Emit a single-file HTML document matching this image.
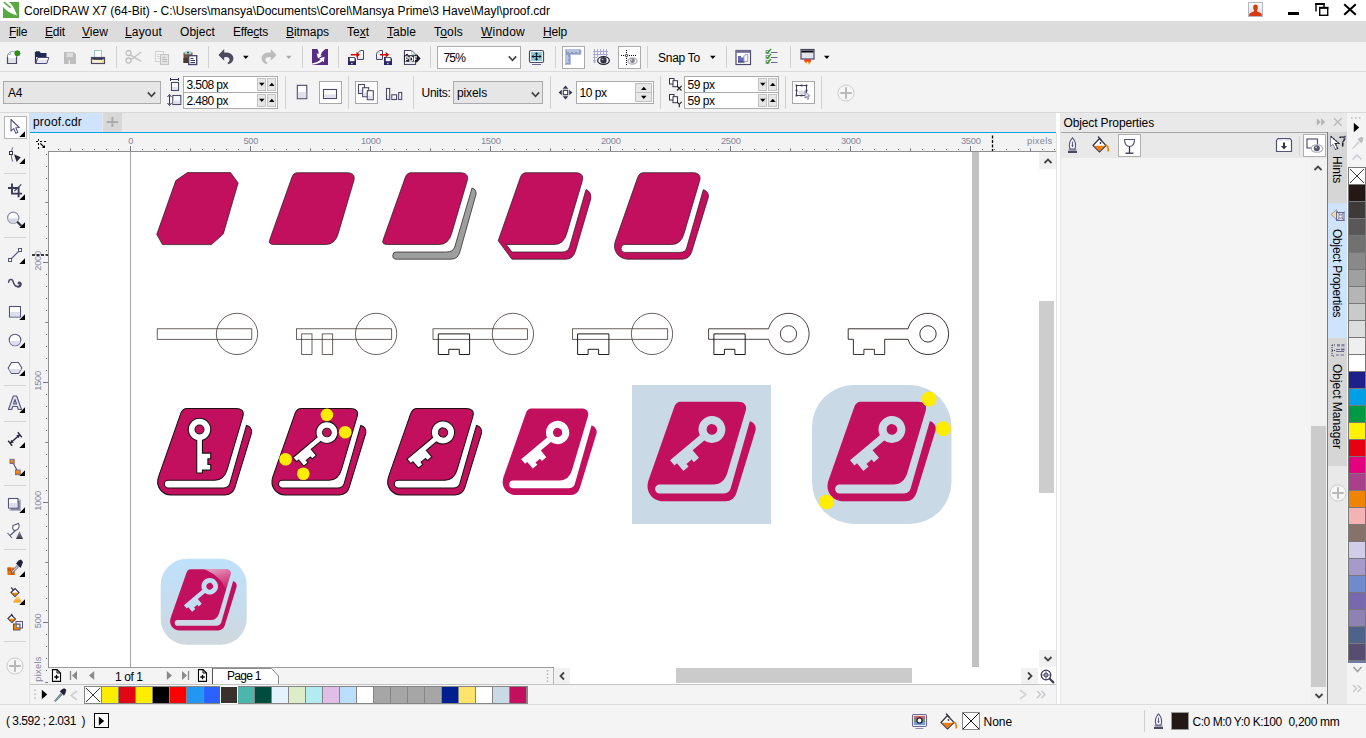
<!DOCTYPE html>
<html>
<head>
<meta charset="utf-8">
<title>CorelDRAW X7</title>
<style>
*{box-sizing:border-box;margin:0;padding:0}
html,body{width:1366px;height:738px;overflow:hidden;background:#f3f3f3;font-family:"Liberation Sans",sans-serif;font-size:13px;color:#000}
.abs{position:absolute}
#app{position:relative;width:1366px;height:738px;overflow:hidden;background:#f3f3f3}
.t{position:absolute;white-space:nowrap;line-height:1}
u{text-decoration:underline;text-underline-offset:1px}
/* bars */
#titlebar{left:0;top:0;width:1366px;height:21px;background:#fff}
#menubar{left:0;top:21px;width:1366px;height:21px;background:#dcdcdc}
#tb1{left:0;top:42px;width:1366px;height:29px;background:#f3f3f3}
#tb1line{left:0;top:71px;width:1366px;height:1px;background:#dcdcdc}
#propbar{left:0;top:72px;width:1366px;height:40px;background:#f3f3f3}
#tabrow{left:0;top:112px;width:1366px;height:20px;background:#e9e9e9;border-top:1px solid #d9d9d9}
.sep{position:absolute;width:1px;background:#d0d0d0}
.menu{top:26px;font-size:13px}
</style>
</head>
<body>
<div id="app">
<!-- TITLE BAR -->
<div id="titlebar" class="abs">
<svg class="abs" style="left:3px;top:2px" width="16" height="16" viewBox="0 0 16 16"><rect width="16" height="16" fill="#58a943"/><path d="M0,0 H5.900 C8.200,1.800 10.500,4.800 11.900,8.200 L14.100,13.600 L10.200,12.200 C6.300,10.400 3,8 0,4.900 Z" fill="#fff"/><path d="M1.200,0.300 L7.200,5.300" stroke="#58a943" stroke-width="1.500" stroke-linecap="round"/></svg>
<div class="t" style="left:24px;top:5px;font-size:12px;letter-spacing:0.01px">CorelDRAW X7 (64-Bit) - C:\Users\mansya\Documents\Corel\Mansya Prime\3 Have\Mayl\proof.cdr</div>
<svg class="abs" style="left:1248px;top:2px" width="15" height="15" viewBox="0 0 15 15"><defs><linearGradient id="ug" x1="0" y1="0" x2="0" y2="1"><stop offset="0" stop-color="#fff"/><stop offset="1" stop-color="#d4d4d8"/></linearGradient></defs><rect x="0.5" y="0.5" width="14" height="14" fill="url(#ug)" stroke="#b4b8c4"/><path d="M7.5 2.6c1.5 0 2.3 1.2 2.3 2.9 0 1.3-.5 2.2-1 2.8 0 .9.5 1.3 1.6 1.7 1.5.5 3 1 3.4 2.5V14H1.2v-1.5c.4-1.5 1.9-2 3.4-2.500 1.100-.4 1.600-.8 1.600-1.700-.5-.6-1-1.500-1-2.800 0-1.700.8-2.900 2.300-2.900z" fill="#d63a0f"/></svg>
<div class="abs" style="left:1288px;top:12px;width:11px;height:3px;background:#000"></div>
<svg class="abs" style="left:1314px;top:2px" width="16" height="15" viewBox="0 0 16 15"><path d="M2 9.500V1.800h8V5" fill="none" stroke="#000" stroke-width="1.400"/><path d="M1.300 2h9.400" stroke="#000" stroke-width="2"/><rect x="5.700" y="5.700" width="8" height="7.600" fill="#fff" stroke="#000" stroke-width="1.400"/><path d="M5 5.800h9.400" stroke="#000" stroke-width="2"/></svg>
<svg class="abs" style="left:1342px;top:3px" width="16" height="14" viewBox="0 0 16 14"><path d="M2.200 1.200L13.800 11.800M13.800 1.200L2.200 11.800" stroke="#000" stroke-width="2.100" fill="none"/></svg>
</div>
<!-- MENU BAR -->
<div id="menubar" class="abs">
<div class="t" style="left:9px;top:5px;font-size:12px;letter-spacing:-0.33px"><u>F</u>ile</div>
<div class="t" style="left:45px;top:5px;font-size:12px;letter-spacing:-0.17px"><u>E</u>dit</div>
<div class="t" style="left:82px;top:5px;font-size:12px;letter-spacing:0.05px"><u>V</u>iew</div>
<div class="t" style="left:125px;top:5px;font-size:12px;letter-spacing:0.16px"><u>L</u>ayout</div>
<div class="t" style="left:180px;top:5px;font-size:12px;letter-spacing:0.05px">Ob<u>j</u>ect</div>
<div class="t" style="left:233px;top:5px;font-size:12px;letter-spacing:-0.21px">Effe<u>c</u>ts</div>
<div class="t" style="left:286px;top:5px;font-size:12px;letter-spacing:-0.05px"><u>B</u>itmaps</div>
<div class="t" style="left:347px;top:5px;font-size:12px;letter-spacing:0px">Te<u>x</u>t</div>
<div class="t" style="left:387px;top:5px;font-size:12px;letter-spacing:0.06px"><u>T</u>able</div>
<div class="t" style="left:434px;top:5px;font-size:12px;letter-spacing:0.2px">T<u>o</u>ols</div>
<div class="t" style="left:481px;top:5px;font-size:12px;letter-spacing:0.22px"><u>W</u>indow</div>
<div class="t" style="left:543px;top:5px;font-size:12px;letter-spacing:-0.17px"><u>H</u>elp</div>
</div>
<!-- TOOLBAR 1 -->
<div id="tb1" class="abs">
<svg class="abs" style="left:6px;top:6px" width="16" height="18" viewBox="0 0 16 18" ><path d="M4.500 3.500H10.500V15.500H1.500V6.500Z" fill="#fff"/><path d="M2 10H10V15H2Z" fill="#e3e3ee"/><path d="M4.500 3.500H10.500M4.500 3.500L1.500 6.500M4.500 3.500V6.500H1.500" fill="none" stroke="#a9b4c0" stroke-width="1"/><path d="M1.500 6.500V8.500M10.500 3.500V8.500" stroke="#8f90aa" stroke-width="1"/><path d="M1.500 8.500V15.500H10.500V8.500" fill="none" stroke="#4b4868" stroke-width="1.200"/><circle cx="11.300" cy="5.200" r="2.700" fill="#2f8f12"/><path d="M11.300 1.800l.8 1.600 1.700-.6-.4 1.700 1.600.7-1.600.8.500 1.700-1.700-.5-.9 1.600-.8-1.600-1.700.5.500-1.700-1.600-.8 1.600-.7-.4-1.700 1.700.6z" fill="#2f8f12"/></svg>
<svg class="abs" style="left:34px;top:6px" width="17" height="18" viewBox="0 0 17 18" ><path d="M1.500 4.200Q1.500 3.200 2.500 3.200H5.500L6.800 5H12.500V9H1.500Z" fill="#1f2a57"/><path d="M1.500 8V15.500H3Z" fill="#1f2a57"/><path d="M1.500 4V15.500" stroke="#1f2a57" stroke-width="1.200"/><path d="M3.800 9.500H14.800L12.800 15.500H1.800Z" fill="#e6e6f0" stroke="#4a4a7a" stroke-width="1"/><path d="M4.200 10H14.200L13.800 11.500H3.700Z" fill="#fff" opacity=".7"/></svg>
<svg class="abs" style="left:63px;top:8px" width="14" height="15" viewBox="0 0 14 15" ><path d="M1 2H10.800L13 4.200V14H1Z" fill="#bdbdbd"/><rect x="3.500" y="2.800" width="6.500" height="4.300" fill="#dedede"/><rect x="5.600" y="10" width="1.500" height="4" fill="#e8e8e8"/></svg>
<svg class="abs" style="left:90px;top:6px" width="17" height="18" viewBox="0 0 17 18" ><rect x="4.500" y="2.500" width="7" height="8" fill="#fff" stroke="#9ec8c4" stroke-width="1"/><rect x="1.500" y="9.500" width="13" height="6" fill="#f3f3d8" stroke="#4b4868" stroke-width="1.200"/><path d="M1.500 9.600H4.500V11.500H1.500ZM11.500 9.600H14.500V11.500H11.500Z" fill="#4b4868"/><rect x="3.800" y="10.200" width="8.400" height="1.500" fill="#15152a"/><rect x="12" y="13" width="1.200" height="1.200" fill="#f5c400"/></svg>
<div class="sep" style="left:116px;top:4px;height:22px"></div>
<svg class="abs" style="left:125px;top:7px" width="18" height="16" viewBox="0 0 18 16" ><g fill="none" stroke="#bfbfbf" stroke-width="1.300"><circle cx="3.500" cy="4" r="2.500"/><circle cx="3.500" cy="11.500" r="2.500"/></g><path d="M5.500 5.200L16.500 11.800L16.800 12.800L14.500 12.300L5 6.800Z" fill="#c2c2c2"/><path d="M5.500 10.300L15.500 2.800L16.800 2.800L16.300 3.800L6 11.500Z" fill="#c2c2c2"/></svg>
<svg class="abs" style="left:154px;top:8px" width="16" height="16" viewBox="0 0 16 16" ><rect x="1.500" y="1.500" width="8" height="10" fill="#f6f6f6" stroke="#d0d0d0"/><path d="M3 4.500h4.500M3 6.500h4.500M3 8.500h3" stroke="#d8d8d8"/><rect x="6.500" y="4.500" width="8" height="10" fill="#e2e2e2" stroke="#c4c4c4"/><path d="M8.500 7.500h3M8.500 9.500h4.500M8.500 11.500h4.500" stroke="#bdbdbd"/></svg>
<svg class="abs" style="left:182px;top:6px" width="17" height="18" viewBox="0 0 17 18" ><rect x="1.500" y="4.500" width="9" height="10.500" fill="#6e5336"/><rect x="1.500" y="10" width="9" height="5" fill="#4e3a24"/><path d="M2.500 6.200Q2.500 2.400 6 2.400Q9.500 2.400 9.500 6.200Z" fill="#a8d8d2"/><circle cx="6" cy="4.600" r="0.900" fill="#222"/><rect x="6.700" y="7.700" width="8" height="8.800" fill="#fff" stroke="#4b4868" stroke-width="1.400"/><path d="M8.500 10.500h3M8.500 12.500h4.500M8.500 14.500h4.500" stroke="#33335a" stroke-width="1"/></svg>
<div class="sep" style="left:208px;top:4px;height:22px"></div>
<svg class="abs" style="left:218px;top:6px" width="16" height="17" viewBox="0 0 16 17" ><path d="M6.200 1L0.400 6.900L6.200 12.800V9.200C8.800 8.600 11.400 9.200 11.600 11.600C11.700 13.200 10.800 14.300 9.400 14.700L10.400 16.300C13.600 15.400 15.600 13 15.400 10C15.200 6.400 11.500 4.300 6.200 4.600Z" fill="#4d4a60"/></svg>
<svg class="abs" style="left:243px;top:13px" width="6" height="5" viewBox="0 0 6 5" ><path d="M0 0.800H5.600L2.800 4Z" fill="#000"/></svg>
<svg class="abs" style="left:261px;top:6px" width="16" height="17" viewBox="0 0 16 17" ><g transform="translate(16,0) scale(-1,1)"><path d="M6.200 1L0.400 6.900L6.200 12.800V9.200C8.800 8.600 11.400 9.200 11.600 11.600C11.700 13.200 10.800 14.300 9.400 14.700L10.400 16.300C13.600 15.400 15.600 13 15.400 10C15.200 6.400 11.500 4.300 6.200 4.600Z" fill="#bdbdbd"/></g></svg>
<svg class="abs" style="left:286px;top:13px" width="6" height="5" viewBox="0 0 6 5" ><path d="M0 0.800H5.600L2.800 4Z" fill="#aaa"/></svg>
<div class="sep" style="left:302px;top:4px;height:22px"></div>
<svg class="abs" style="left:312px;top:7px" width="16" height="16" viewBox="0 0 16 16"><rect width="16" height="16" fill="#582c83"/><path d="M5.400 0H13.200L9.800 3.200C9.400 4.800 9 5.800 8.400 6.800L10.400 6.500L6 9.400L4.600 4.200L6.400 5.200C6.800 3.400 6.500 1.600 5.400 0Z" fill="#fff"/><path d="M0 14.600C3.800 13.800 6.800 12.400 8.800 10.600L7.200 9.500L12.600 7.800L11.800 13.200L10.400 11.900C8 13.900 4.400 15.300 0 15.800Z" fill="#fff"/></svg>
<div class="sep" style="left:338px;top:4px;height:22px"></div>
<svg class="abs" style="left:347px;top:7px" width="18" height="17" viewBox="0 0 18 17" ><path d="M13.2 1.5H16.5V10.5H10.5V4.2Z" fill="#fff" stroke="#4b4868" stroke-width="1"/><path d="M13.2 1.5V4.2H10.5" fill="none" stroke="#9fcfc8" stroke-width=".9"/><rect x="11" y="7.5" width="5" height="2.500" fill="#e6e6f0"/><path d="M1 8H7.5L9 9.5V16H1Z" fill="#27276a"/><rect x="2.8" y="8.8" width="4.700" height="3.400" fill="#fff"/><rect x="4.2" y="13.8" width="1.300" height="1.400" fill="#e8e8f4"/><path d="M3.800 5H9.500V3L13 5.800L9.500 8.600V6.600H3.800Z" fill="#d40000"/></svg>
<svg class="abs" style="left:375px;top:7px" width="18" height="17" viewBox="0 0 18 17" ><path d="M4.2 1.5H7.5V10.5H1.5V4.2Z" fill="#fff" stroke="#4b4868" stroke-width="1"/><path d="M4.2 1.5V4.2H1.5" fill="none" stroke="#9fcfc8" stroke-width=".9"/><rect x="2" y="7.5" width="5" height="2.500" fill="#e6e6f0"/><path d="M9 8H15.5L17 9.5V16H9Z" fill="#27276a"/><rect x="10.8" y="8.8" width="4.700" height="3.400" fill="#fff"/><rect x="12.2" y="13.8" width="1.300" height="1.400" fill="#e8e8f4"/><path d="M5 5H10.700V3L14.200 5.800L10.700 8.600V6.600H5Z" fill="#d40000"/></svg>
<svg class="abs" style="left:403px;top:7px" width="18" height="17" viewBox="0 0 18 17" ><path d="M1.500 1.500H8.500L12.500 5.500V15.500H1.500Z" fill="#fff" stroke="#4b4868" stroke-width="1.200"/><path d="M8.500 1.500V5.500H12.500" fill="#dff0ee" stroke="#9fcfc8" stroke-width=".8"/><rect x="2" y="13.200" width="10" height="1.800" fill="#e6e6f0"/><path d="M2.500 5.500Q4 4.300 5.500 5.200L3.800 6.200Z" fill="#15152a"/><path d="M1 6.200H13.500V4.800L17.500 9.500L13.500 14V12.800H1Z" fill="#15152a"/><g fill="none" stroke="#fff" stroke-width="1.150"><path d="M2.600 12.600V7.800H4.300Q5.300 7.800 5.300 9Q5.300 10.200 4.300 10.200H2.600"/><path d="M6.900 7.800V12.100H8Q9.800 12.100 9.800 9.950Q9.800 7.800 8 7.800H6.900"/><path d="M11.400 12.600V7.800H14M11.400 10.100H13.500"/></g></svg>
<div class="sep" style="left:430px;top:4px;height:22px"></div>
<div class="abs" style="left:437px;top:4px;width:84px;height:23px;background:#fff;border:1px solid #ababab"></div>
<div class="t" style="left:443.500px;top:10px;font-size:12px;letter-spacing:-0.8px">75%</div>
<svg class="abs" style="left:508.0px;top:13.0px" width="9" height="8" viewBox="0 0 9 8" ><path d="M0.800 1.300L4.500 5.300L8.200 1.300" fill="none" stroke="#444" stroke-width="1.700"/></svg>
<svg class="abs" style="left:528px;top:7px" width="17" height="17" viewBox="0 0 17 17" ><rect x="1.500" y="1.500" width="14" height="12" rx="1.500" fill="#fff" stroke="#4b4868" stroke-width="1.200"/><rect x="3" y="3" width="11" height="9" fill="#86ccd9"/><path d="M8.500 3.200L10.300 5.300H9.100V6.900H11.400V5.700L13.600 7.500L11.400 9.300V8.100H9.100V9.700H10.300L8.500 11.800L6.700 9.700H7.900V8.100H5.600V9.300L3.400 7.500L5.600 5.700V6.900H7.900V5.300H6.700Z" fill="#15152a"/><path d="M4 15.500H13" stroke="#6a6890" stroke-width="1"/></svg>
<div class="sep" style="left:555px;top:4px;height:22px"></div>
<div class="abs" style="left:562px;top:4px;width:23px;height:23px;background:#fff;border:1px solid #ababab"></div>
<svg class="abs" style="left:565px;top:7px" width="17" height="17" viewBox="0 0 17 17" ><path d="M0.500 0.500H16V5.500H5.500V15.500H0.500Z" fill="#8d9bc4" stroke="#b9c2dc" stroke-width="1"/><path d="M3 1v2M5 1v3M7 1v2M9 1v3M11 1v2M13 1v3M1 7h2M1 9h3M1 11h2M1 13h3" stroke="#e8ecf8" stroke-width="1"/></svg>
<svg class="abs" style="left:592px;top:6px" width="19" height="18" viewBox="0 0 19 18" ><path d="M2.500 1v14M5.500 1v8M8.500 1v6M11.500 1v6M14.500 1v7M1 3.500h15M1 6.500h15M1 9.500h4M1 12.500h3" stroke="#a9a9d2" stroke-width="1"/><path d="M1 13.500L2.500 15.500L4 13.500Z" fill="#a9a9d2"/><ellipse cx="11.5" cy="12.5" rx="5.8" ry="3.8" fill="#fff" stroke="#222230" stroke-width="1.300"/><circle cx="11.5" cy="12.2" r="3.1999999999999997" fill="#33334a"/><circle cx="10.6" cy="11.5" r="0.800" fill="#fff" opacity=".8"/></svg>
<div class="abs" style="left:618px;top:4px;width:23px;height:23px;background:#fff;border:1px solid #ababab"></div>
<svg class="abs" style="left:620px;top:7px" width="19" height="17" viewBox="0 0 19 17" ><path d="M1 6.500H17" stroke="#111" stroke-width="1" stroke-dasharray="1 1"/><path d="M6.500 1V16" stroke="#111" stroke-width="1" stroke-dasharray="1 1"/><circle cx="6.500" cy="6.500" r="1.200" fill="#fff" stroke="#111" stroke-width=".8"/><ellipse cx="12.5" cy="12" rx="4.5" ry="3" fill="#fff" stroke="#b4b4bc" stroke-width="1.300"/><circle cx="12.5" cy="11.7" r="2.4" fill="#808088"/><circle cx="11.6" cy="11" r="0.800" fill="#fff" opacity=".8"/></svg>
<div class="sep" style="left:647px;top:4px;height:22px"></div>
<div class="t" style="left:658px;top:10px;font-size:12px;letter-spacing:-0.26px">Snap To</div>
<svg class="abs" style="left:710px;top:13px" width="6" height="5" viewBox="0 0 6 5" ><path d="M0 0.800H5.600L2.800 4Z" fill="#000"/></svg>
<div class="sep" style="left:726px;top:4px;height:22px"></div>
<svg class="abs" style="left:735px;top:7px" width="17" height="17" viewBox="0 0 17 17" ><rect x="1" y="1.500" width="14.500" height="14" fill="#fff" stroke="#4b4868" stroke-width="1.200"/><rect x="1" y="1" width="14.500" height="2.800" fill="#6c6a92"/><path d="M3 7H6V8.500H9.500V13.500H3Z" fill="#6767b3"/><rect x="3" y="12" width="6.500" height="1.500" fill="#4d4d93"/><path d="M10.300 5.500H12.800V12.500H8.800V7Z" fill="#f4f4fa" stroke="#8a88a8" stroke-width=".8"/><path d="M10.300 5.500V7H8.800" fill="none" stroke="#9fcfc8" stroke-width=".8"/></svg>
<svg class="abs" style="left:765px;top:6px" width="14" height="17" viewBox="0 0 14 17" ><rect x="1" y="2.5" width="3" height="3" fill="#fff" stroke="#8a88a8" stroke-width=".8"/><path d="M1.300 3.7L2.600 5.1L6 0.8999999999999999" fill="none" stroke="#23a012" stroke-width="1.300"/><path d="M6 4.5H12.500" stroke="#6c6a92" stroke-width="1"/><rect x="1" y="7.5" width="3" height="3" fill="#fff" stroke="#8a88a8" stroke-width=".8"/><path d="M1.300 8.7L2.600 10.1L6 5.9" fill="none" stroke="#23a012" stroke-width="1.300"/><path d="M6 9.5H12.500" stroke="#6c6a92" stroke-width="1"/><rect x="1" y="12.5" width="3" height="3" fill="#fff" stroke="#8a88a8" stroke-width=".8"/><path d="M1.300 13.7L2.600 15.1L6 10.9" fill="none" stroke="#23a012" stroke-width="1.300"/><path d="M6 14.5H12.500" stroke="#6c6a92" stroke-width="1"/></svg>
<div class="sep" style="left:790px;top:4px;height:22px"></div>
<svg class="abs" style="left:800px;top:6px" width="16" height="18" viewBox="0 0 16 18" ><defs><linearGradient id="fl" x1="0" y1="0" x2="0" y2="1"><stop offset="0" stop-color="#f01818"/><stop offset=".55" stop-color="#ff7a10"/><stop offset="1" stop-color="#ffe030"/></linearGradient></defs><rect x="1" y="1.500" width="13" height="9.500" fill="#e2e2ec" stroke="#4b4868" stroke-width="1.200"/><rect x="1.500" y="2.500" width="12" height="2" fill="#0c0c18"/><path d="M4.200 11.500H10.800C11.500 13.500 10.500 16 8 16.800C8.800 15.500 8.500 14.200 7.500 13.600C6.500 14.200 6.500 15 6.800 15.600C4.800 15 3.800 13.300 4.200 11.500Z" fill="url(#fl)"/></svg>
<svg class="abs" style="left:824px;top:13px" width="6" height="5" viewBox="0 0 6 5" ><path d="M0 0.800H5.600L2.800 4Z" fill="#000"/></svg>
</div>
<div id="tb1line" class="abs"></div>
<!-- PROPERTY BAR -->
<div id="propbar" class="abs">
<div class="abs" style="left:3px;top:9px;width:158px;height:23px;background:#e6e6e6;border:1px solid #ababab"></div>
<div class="t" style="left:8px;top:15px;font-size:12px;letter-spacing:-0.3px">A4</div>
<svg class="abs" style="left:147.0px;top:18.5px" width="9" height="8" viewBox="0 0 9 8" ><path d="M0.800 1.300L4.500 5.300L8.200 1.300" fill="none" stroke="#444" stroke-width="1.700"/></svg>
<svg class="abs" style="left:168px;top:5px" width="14" height="15" viewBox="0 0 14 15" ><path d="M2 2.500H11" stroke="#33334a" stroke-width="1"/><path d="M2.500 1V4M10.500 1V4" stroke="#33334a" stroke-width="1"/><rect x="3.500" y="5.500" width="7" height="8" fill="#fff" stroke="#4b4868" stroke-width="1.100"/><rect x="4.100" y="10" width="5.800" height="3" fill="#e0e0ec"/></svg>
<svg class="abs" style="left:166px;top:21px" width="16" height="14" viewBox="0 0 16 14" ><path d="M3.500 2.500V11.500" stroke="#33334a" stroke-width="1"/><path d="M1.500 4L3.500 1.500L5.500 4M1.500 10L3.500 12.500L5.500 10" fill="none" stroke="#33334a" stroke-width="1"/><rect x="6.800" y="2.500" width="8" height="9" fill="#fff" stroke="#4b4868" stroke-width="1.100"/><rect x="7.400" y="7.500" width="6.800" height="3.500" fill="#e0e0ec"/></svg>
<div class="abs" style="left:183px;top:4px;width:95px;height:33px;background:#fff;border:1px solid #ababab"></div>
<div class="abs" style="left:183px;top:20px;width:95px;height:1px;background:#ababab"></div>
<div class="t" style="left:186.5px;top:6.8px;font-size:12px;letter-spacing:-0.59px">3.508 px</div>
<div class="t" style="left:186.5px;top:22.8px;font-size:12px;letter-spacing:-0.59px">2.480 px</div>
<div class="abs" style="left:257px;top:6px;width:9px;height:13px;background:#e6e6e6;border:1px solid #c4c4c4"></div>
<svg class="abs" style="left:258.7px;top:10px" width="6" height="5" viewBox="0 0 6 5" ><path d="M0 0.800H5.600L2.800 4Z" fill="#000"/></svg>
<div class="abs" style="left:267px;top:6px;width:9px;height:13px;background:#e6e6e6;border:1px solid #c4c4c4"></div>
<svg class="abs" style="left:268.7px;top:10px" width="6" height="5" viewBox="0 0 6 5" ><path d="M0 4H5.600L2.800 0.800Z" fill="#000"/></svg>
<div class="abs" style="left:257px;top:22px;width:9px;height:13px;background:#e6e6e6;border:1px solid #c4c4c4"></div>
<svg class="abs" style="left:258.7px;top:26px" width="6" height="5" viewBox="0 0 6 5" ><path d="M0 0.800H5.600L2.800 4Z" fill="#000"/></svg>
<div class="abs" style="left:267px;top:22px;width:9px;height:13px;background:#e6e6e6;border:1px solid #c4c4c4"></div>
<svg class="abs" style="left:268.7px;top:26px" width="6" height="5" viewBox="0 0 6 5" ><path d="M0 4H5.600L2.800 0.800Z" fill="#000"/></svg>
<div class="sep" style="left:285px;top:4px;height:33px"></div>
<svg class="abs" style="left:296px;top:12px" width="12" height="16" viewBox="0 0 12 16" ><rect x="1.3" y="1.3" width="9.5" height="13.4" fill="#fff" stroke="#4b4868" stroke-width="1.100"/><rect x="1.9" y="8" width="8.3" height="6.100000000000001" fill="#e0e0ec"/></svg>
<div class="abs" style="left:319px;top:9px;width:23px;height:23px;background:#fff;border:1px solid #a8a8a8"></div>
<svg class="abs" style="left:322px;top:16px" width="16" height="12" viewBox="0 0 16 12" ><rect x="1.5" y="1.5" width="13" height="9" fill="#fff" stroke="#4b4868" stroke-width="1.100"/><rect x="2.1" y="6.5" width="11.8" height="3.4" fill="#e0e0ec"/></svg>
<div class="sep" style="left:348px;top:4px;height:33px"></div>
<div class="abs" style="left:355px;top:9px;width:23px;height:23px;background:#fff;border:1px solid #a8a8a8"></div>
<svg class="abs" style="left:357px;top:11px" width="18" height="18" viewBox="0 0 18 18" ><rect x="1.5" y="1.5" width="6" height="9" fill="#fff" stroke="#4b4868" stroke-width="1.100"/><rect x="2.1" y="6.5" width="4.8" height="3.4" fill="#e0e0ec"/><rect x="5.7" y="4.7" width="6" height="9" fill="#fff" stroke="#4b4868" stroke-width="1.100"/><rect x="6.3" y="9.5" width="4.8" height="3.599999999999999" fill="#e0e0ec"/><rect x="10.3" y="7.7" width="6" height="9" fill="#fff" stroke="#4b4868" stroke-width="1.100"/><rect x="10.9" y="12.5" width="4.8" height="3.599999999999999" fill="#e0e0ec"/></svg>
<svg class="abs" style="left:385px;top:15px" width="18" height="14" viewBox="0 0 18 14" ><rect x="1.5" y="1.5" width="3.2" height="11" fill="#fff" stroke="#4b4868" stroke-width="1.100"/><rect x="2.1" y="8" width="2.0" height="3.9" fill="#e0e0ec"/><rect x="6.8" y="7.8" width="4.8" height="4.7" fill="#fff" stroke="#4b4868" stroke-width="1.100"/><rect x="7.3999999999999995" y="10.5" width="3.5999999999999996" height="1.4" fill="#e0e0ec"/><rect x="13.7" y="5.5" width="3" height="7" fill="#fff" stroke="#4b4868" stroke-width="1.100"/><rect x="14.299999999999999" y="9" width="1.8" height="2.9" fill="#e0e0ec"/></svg>
<div class="sep" style="left:413px;top:4px;height:33px"></div>
<div class="t" style="left:421.500px;top:15px;font-size:12px;letter-spacing:-0.28px">Units:</div>
<div class="abs" style="left:453px;top:9px;width:90px;height:23px;background:#e6e6e6;border:1px solid #ababab"></div>
<div class="t" style="left:457px;top:15px;font-size:12px;letter-spacing:-0.11px">pixels</div>
<svg class="abs" style="left:530.5px;top:18.5px" width="9" height="8" viewBox="0 0 9 8" ><path d="M0.800 1.300L4.500 5.300L8.200 1.300" fill="none" stroke="#444" stroke-width="1.700"/></svg>
<div class="sep" style="left:550px;top:4px;height:33px"></div>
<svg class="abs" style="left:558px;top:13px" width="15" height="15" viewBox="0 0 15 15" ><rect x="5.300" y="5.300" width="4.400" height="4.400" fill="#fff" stroke="#33334a" stroke-width="1.100"/><path d="M7.500 0.600L10.300 3.800H4.700ZM7.500 14.400L10.300 11.200H4.700ZM0.600 7.500L3.800 4.700V10.300ZM14.400 7.500L11.200 4.700V10.300Z" fill="#33334a"/></svg>
<div class="abs" style="left:576px;top:9px;width:78px;height:23px;background:#fff;border:1px solid #ababab"></div>
<div class="t" style="left:579.500px;top:15px;font-size:12px;letter-spacing:-0.47px">10 px</div>
<div class="abs" style="left:635px;top:11px;width:17px;height:10px;background:#e8e8e8;border:1px solid #c0c0c0"></div>
<div class="abs" style="left:635px;top:20px;width:17px;height:10px;background:#e8e8e8;border:1px solid #c0c0c0"></div>
<svg class="abs" style="left:640.7px;top:14px" width="6" height="5" viewBox="0 0 6 5" ><path d="M0 4H5.600L2.800 0.800Z" fill="#000"/></svg>
<svg class="abs" style="left:640.7px;top:23px" width="6" height="5" viewBox="0 0 6 5" ><path d="M0 0.800H5.600L2.800 4Z" fill="#000"/></svg>
<div class="sep" style="left:660px;top:4px;height:33px"></div>
<svg class="abs" style="left:668px;top:5px" width="15" height="15" viewBox="0 0 15 15" ><rect x="1.500" y="1.500" width="4.500" height="5.500" fill="#fff" stroke="#33334a" stroke-width="1"/><rect x="5" y="3.700" width="4.500" height="6" fill="#fff" stroke="#33334a" stroke-width="1"/><path d="M9 9L13.500 13.500M13.500 9L9 13.500" stroke="#222" stroke-width="1.100"/></svg>
<svg class="abs" style="left:668px;top:21px" width="15" height="15" viewBox="0 0 15 15" ><rect x="1.500" y="1.500" width="4.500" height="5.500" fill="#fff" stroke="#33334a" stroke-width="1"/><rect x="5" y="3.700" width="4.500" height="6" fill="#fff" stroke="#33334a" stroke-width="1"/><path d="M9 8.800L11.300 11.300L13.600 8.800M11.300 11.300V14.300" fill="none" stroke="#222" stroke-width="1.100"/></svg>
<div class="abs" style="left:684px;top:4px;width:95px;height:33px;background:#fff;border:1px solid #ababab"></div>
<div class="abs" style="left:684px;top:20px;width:95px;height:1px;background:#ababab"></div>
<div class="t" style="left:687.5px;top:6.8px;font-size:12px;letter-spacing:-0.47px">59 px</div>
<div class="t" style="left:687.5px;top:22.8px;font-size:12px;letter-spacing:-0.47px">59 px</div>
<div class="abs" style="left:758px;top:6px;width:9px;height:13px;background:#e6e6e6;border:1px solid #c4c4c4"></div>
<svg class="abs" style="left:759.7px;top:10px" width="6" height="5" viewBox="0 0 6 5" ><path d="M0 0.800H5.600L2.800 4Z" fill="#000"/></svg>
<div class="abs" style="left:768px;top:6px;width:9px;height:13px;background:#e6e6e6;border:1px solid #c4c4c4"></div>
<svg class="abs" style="left:769.7px;top:10px" width="6" height="5" viewBox="0 0 6 5" ><path d="M0 4H5.600L2.800 0.800Z" fill="#000"/></svg>
<div class="abs" style="left:758px;top:22px;width:9px;height:13px;background:#e6e6e6;border:1px solid #c4c4c4"></div>
<svg class="abs" style="left:759.7px;top:26px" width="6" height="5" viewBox="0 0 6 5" ><path d="M0 0.800H5.600L2.800 4Z" fill="#000"/></svg>
<div class="abs" style="left:768px;top:22px;width:9px;height:13px;background:#e6e6e6;border:1px solid #c4c4c4"></div>
<svg class="abs" style="left:769.7px;top:26px" width="6" height="5" viewBox="0 0 6 5" ><path d="M0 4H5.600L2.800 0.800Z" fill="#000"/></svg>
<div class="sep" style="left:785px;top:4px;height:33px"></div>
<div class="abs" style="left:792px;top:9px;width:23px;height:23px;background:#fff;border:1px solid #a8a8a8"></div>
<svg class="abs" style="left:794px;top:11px" width="18" height="19" viewBox="0 0 18 19" ><rect x="2.500" y="2.500" width="10" height="10" fill="#fff" stroke="#4b4868" stroke-width="1"/><rect x="4.500" y="7.500" width="6.500" height="3.500" fill="#dcdcea"/><rect x="1.6" y="1.6" width="1.800" height="1.800" fill="#33334a"/><rect x="1.6" y="6.6" width="1.800" height="1.800" fill="#33334a"/><rect x="1.6" y="11.6" width="1.800" height="1.800" fill="#33334a"/><rect x="6.6" y="1.6" width="1.800" height="1.800" fill="#33334a"/><rect x="6.6" y="11.6" width="1.800" height="1.800" fill="#33334a"/><rect x="11.6" y="1.6" width="1.800" height="1.800" fill="#33334a"/><rect x="11.6" y="6.6" width="1.800" height="1.800" fill="#33334a"/><path d="M11 8.500L15.800 13L13.700 13.200L14.800 15.800L13.600 16.300L12.500 13.800L11 15Z" fill="#e8e8f2" stroke="#6c6a92" stroke-width=".8"/></svg>
<div class="sep" style="left:821px;top:4px;height:33px"></div>
<svg class="abs" style="left:836px;top:11px" width="20" height="20" viewBox="0 0 20 20" ><circle cx="10" cy="10" r="8.100" fill="#f6f6f6" stroke="#cdcdcd" stroke-width="1"/><path d="M4.200 10H15.800M10 4.200V15.800" stroke="#b9b9b9" stroke-width="2"/></svg>
</div>
<!-- TAB ROW -->
<div id="tabrow" class="abs">
<div class="abs" style="left:30px;top:0px;width:72px;height:19px;background:#cfe3fc"></div>
<div class="t" style="left:33px;top:3px;font-size:12px;letter-spacing:0.18px">proof.cdr</div>
<div class="abs" style="left:103px;top:0px;width:19px;height:19px;background:#d8d8d8"></div>
<svg class="abs" style="left:106px;top:3px" width="13" height="12" viewBox="0 0 13 12"><path d="M0.800 6H12M6.400 1V11" stroke="#ababab" stroke-width="2"/></svg>
</div>
<div class="abs" style="left:30px;top:131.800px;width:1026px;height:1.400px;background:#08a0ee"></div>
<!-- TOOLBOX -->
<div class="abs" style="left:0;top:113px;width:30px;height:591px;background:#f3f3f3"></div>
<div class="abs" style="left:28px;top:113px;width:1px;height:591px;background:#f9f9f9"></div>
<div class="abs" style="left:29px;top:113px;width:1px;height:591px;background:#dedede"></div>
<div class="abs" style="left:4px;top:116px;width:23px;height:23px;background:#fff;border:1px solid #b4b4b4"></div>
<svg class="abs" style="left:9px;top:118px" width="13" height="18" viewBox="0 0 13 18" ><path d="M2 1.500L2 13L4.800 10.600L6.800 15.300L8.800 14.400L6.800 9.800L10.300 9.500Z" fill="#fff" stroke="#55557a" stroke-width="1.100" stroke-linejoin="round"/></svg>
<svg class="abs" style="left:19px;top:131px" width="6" height="6" viewBox="0 0 6 6" ><path d="M6 0.300V6H0.300Z" fill="#000"/></svg>
<svg class="abs" style="left:7px;top:146px" width="16" height="18" viewBox="0 0 16 18"><path d="M5.800 1.500C3.800 5 3.800 11 5.800 15.500" fill="none" stroke="#6c6a92" stroke-width="1.100"/><rect x="2.500" y="5.500" width="3" height="3" fill="#fff" stroke="#33334a" stroke-width="1"/><path d="M7 8.300L13.800 11.300L9.600 16Z" fill="#26263a"/></svg>
<svg class="abs" style="left:19px;top:158px" width="6" height="6" viewBox="0 0 6 6" ><path d="M6 0.300V6H0.300Z" fill="#000"/></svg>
<div class="abs" style="left:4px;top:173px;width:22px;height:1px;background:#d4d4d4"></div>
<svg class="abs" style="left:7px;top:182px" width="16" height="17" viewBox="0 0 16 17"><path d="M1 6H11.600V15.300M5 1.600V11.600H15" fill="none" stroke="#3a3a55" stroke-width="1.900"/><path d="M14.300 2.300L7.400 9" stroke="#3a3a55" stroke-width="1.100"/></svg>
<svg class="abs" style="left:19px;top:194px" width="6" height="6" viewBox="0 0 6 6" ><path d="M6 0.300V6H0.300Z" fill="#000"/></svg>
<svg class="abs" style="left:6px;top:210px" width="18" height="18" viewBox="0 0 18 18"><circle cx="7.200" cy="7.800" r="5.600" fill="#fff" stroke="#8a8aa4" stroke-width="1.200"/><path d="M2.200 8.500H12.200A5 5 0 0 1 2.200 8.500Z" fill="#d3d3e2"/><path d="M11.200 11.800L15.500 16" stroke="#33334a" stroke-width="2.200"/></svg>
<svg class="abs" style="left:19px;top:222px" width="6" height="6" viewBox="0 0 6 6" ><path d="M6 0.300V6H0.300Z" fill="#000"/></svg>
<div class="abs" style="left:4px;top:237px;width:22px;height:1px;background:#d4d4d4"></div>
<svg class="abs" style="left:7px;top:247px" width="16" height="16" viewBox="0 0 16 16" ><path d="M3 13L13 3" stroke="#55557a" stroke-width="1.100"/><rect x="1.500" y="11.500" width="3" height="3" fill="#fff" stroke="#55557a" stroke-width="1"/><rect x="11.500" y="1.500" width="3" height="3" fill="#fff" stroke="#55557a" stroke-width="1"/></svg>
<svg class="abs" style="left:19px;top:258px" width="6" height="6" viewBox="0 0 6 6" ><path d="M6 0.300V6H0.300Z" fill="#000"/></svg>
<svg class="abs" style="left:7px;top:277px" width="16" height="13" viewBox="0 0 16 13"><path d="M1.600 5.200C1.600 2.200 5.200 1.600 6 4.200C6.800 7 8.200 9.800 11 9.600" fill="none" stroke="#4b4868" stroke-width="1.500" stroke-linecap="round"/><path d="M8 8.500C9.500 11.800 14.800 11.200 14.800 7.200C14.800 4.200 11.200 3.600 10.600 6C10.300 7.300 11.800 8 12.400 7C12.500 8.800 10 9.500 8 8.500Z" fill="#4b4868"/></svg>
<svg class="abs" style="left:8px;top:305px" width="14" height="14" viewBox="0 0 14 14" ><rect x="1.500" y="1.500" width="11" height="10.500" fill="#fff" stroke="#55557a" stroke-width="1.100"/><rect x="2.100" y="7" width="9.800" height="4.400" fill="#dedeea"/></svg>
<svg class="abs" style="left:19px;top:314px" width="6" height="6" viewBox="0 0 6 6" ><path d="M6 0.300V6H0.300Z" fill="#000"/></svg>
<svg class="abs" style="left:8px;top:333px" width="14" height="14" viewBox="0 0 14 14" ><circle cx="7" cy="7" r="5.800" fill="#fff" stroke="#55557a" stroke-width="1.100"/><path d="M1.600 8H12.400A5.500 5.500 0 0 1 1.600 8Z" fill="#dedeea"/></svg>
<svg class="abs" style="left:19px;top:342px" width="6" height="6" viewBox="0 0 6 6" ><path d="M6 0.300V6H0.300Z" fill="#000"/></svg>
<svg class="abs" style="left:7px;top:361px" width="16" height="14" viewBox="0 0 16 14" ><path d="M4.500 1.500H11.500L14.800 7L11.500 12.500H4.500L1.200 7Z" fill="#fff" stroke="#55557a" stroke-width="1.100"/><path d="M1.800 8H14.200L11.200 12H4.800Z" fill="#dedeea"/></svg>
<svg class="abs" style="left:19px;top:370px" width="6" height="6" viewBox="0 0 6 6" ><path d="M6 0.300V6H0.300Z" fill="#000"/></svg>
<div class="abs" style="left:4px;top:385px;width:22px;height:1px;background:#d4d4d4"></div>
<svg class="abs" style="left:7px;top:394px" width="16" height="18" viewBox="0 0 16 18" ><path d="M6.300 2H9.700L14.500 15.500H11.300L10.300 12.500H5.700L4.700 15.500H1.500ZM8 5.500L6.500 10H9.500Z" fill="#e4e4ee" stroke="#55557a" stroke-width="1.100" stroke-linejoin="round"/></svg>
<svg class="abs" style="left:19px;top:407px" width="6" height="6" viewBox="0 0 6 6" ><path d="M6 0.300V6H0.300Z" fill="#000"/></svg>
<div class="abs" style="left:4px;top:421px;width:22px;height:1px;background:#d4d4d4"></div>
<svg class="abs" style="left:7px;top:431px" width="16" height="16" viewBox="0 0 16 16"><path d="M3.200 12.300L12.800 3.700" stroke="#2a2a40" stroke-width="1.500"/><path d="M1.200 9.800L5.200 14.800M10.800 1.200L14.800 6.200" stroke="#2a2a40" stroke-width="1.400"/><path d="M3.200 12.300L4.200 8.800L6.800 11.800ZM12.800 3.700L11.800 7.200L9.200 4.200Z" fill="#2a2a40"/></svg>
<svg class="abs" style="left:19px;top:442px" width="6" height="6" viewBox="0 0 6 6" ><path d="M6 0.300V6H0.300Z" fill="#000"/></svg>
<svg class="abs" style="left:8px;top:457px" width="14" height="19" viewBox="0 0 14 19"><defs><linearGradient id="og" x1="0" y1="0" x2="0" y2="1"><stop offset="0" stop-color="#ff9a1a"/><stop offset="1" stop-color="#e86a00"/></linearGradient></defs><path d="M4 4L10 15" stroke="#4b4868" stroke-width="1.100"/><rect x="2" y="2.300" width="4.200" height="4.200" fill="url(#og)" stroke="#6c6a92" stroke-width=".9"/><rect x="7.500" y="13" width="4.700" height="4.700" fill="url(#og)" stroke="#6c6a92" stroke-width=".9"/></svg>
<svg class="abs" style="left:19px;top:470px" width="6" height="6" viewBox="0 0 6 6" ><path d="M6 0.300V6H0.300Z" fill="#000"/></svg>
<div class="abs" style="left:4px;top:485px;width:22px;height:1px;background:#d4d4d4"></div>
<svg class="abs" style="left:7px;top:497px" width="15" height="15" viewBox="0 0 15 15" ><rect x="3.500" y="3.500" width="10" height="10" fill="#8a8aa8"/><rect x="3" y="3" width="10.500" height="10.500" fill="none" stroke="#b4b4c8" stroke-width="1"/><rect x="1.500" y="1.500" width="9.500" height="9.500" fill="#fff" stroke="#55557a" stroke-width="1.100"/><rect x="2.100" y="6" width="8.300" height="4.400" fill="#dedeea"/></svg>
<svg class="abs" style="left:19px;top:507px" width="6" height="6" viewBox="0 0 6 6" ><path d="M6 0.300V6H0.300Z" fill="#000"/></svg>
<svg class="abs" style="left:6px;top:522px" width="18" height="18" viewBox="0 0 18 18" ><path d="M7 3.500L12.500 1.500C14 4 13 7 10 8.200C7.500 9 6 7 7 3.500Z" fill="#fff" stroke="#55557a" stroke-width="1.100"/><path d="M9.500 8.500L4 13.500M1.500 11L6 16" stroke="#55557a" stroke-width="1.100"/><defs><linearGradient id="tg" x1="0" y1="0" x2="0" y2="1"><stop offset="0" stop-color="#9a9ab4"/><stop offset="1" stop-color="#33334a"/></linearGradient></defs><path d="M13.500 9L17 17H10Z" fill="url(#tg)"/></svg>
<div class="abs" style="left:4px;top:549px;width:22px;height:1px;background:#d4d4d4"></div>
<svg class="abs" style="left:6px;top:558px" width="18" height="18" viewBox="0 0 18 18" ><rect x="1.500" y="9.500" width="7" height="7.500" fill="#e87400"/><rect x="1.500" y="9.500" width="3.500" height="3.700" fill="#c85a00"/><rect x="5" y="13.200" width="3.500" height="3.800" fill="#c85a00"/><path d="M5 14L11 7.500L12.500 9L6.500 15Z" fill="#c8c8d8" stroke="#55557a" stroke-width=".8"/><path d="M10 5.500L14.500 10L15.500 8L17 4L15 1.500L12.500 2.500Z" fill="#22223a"/></svg>
<svg class="abs" style="left:19px;top:571px" width="6" height="6" viewBox="0 0 6 6" ><path d="M6 0.300V6H0.300Z" fill="#000"/></svg>
<svg class="abs" style="left:8px;top:586px" width="16" height="18" viewBox="0 0 16 18" ><path d="M3 6.500L7 2.500L11 6.500L7 10.500Z" fill="#fff" stroke="#33334a" stroke-width="1.100"/><path d="M3.800 6.800H10.200L7 10Z" fill="#f08000"/><path d="M3 1.500L6 4.500" stroke="#33334a" stroke-width="1.100"/><defs><linearGradient id="ig" x1="0" y1="0" x2="0" y2="1"><stop offset="0" stop-color="#fff0c0"/><stop offset="1" stop-color="#f09a10"/></linearGradient></defs><path d="M9.500 8.500L14 16.500H5Z" fill="url(#ig)"/></svg>
<svg class="abs" style="left:19px;top:599px" width="6" height="6" viewBox="0 0 6 6" ><path d="M6 0.300V6H0.300Z" fill="#000"/></svg>
<svg class="abs" style="left:6px;top:613px" width="18" height="18" viewBox="0 0 18 18" ><path d="M2 5.500L5.500 2L9.500 6L6 9.500Z" fill="#fff" stroke="#33334a" stroke-width="1.100"/><path d="M2.800 5.800H9L6 9Z" fill="#f08000"/><path d="M5 1L7 3" stroke="#33334a" stroke-width="1.100"/><rect x="10" y="8.500" width="6.500" height="6.500" fill="#f4f4fa" stroke="#55557a" stroke-width="1"/><rect x="7.500" y="11" width="6.500" height="6" fill="#f08000" stroke="#55557a" stroke-width="1"/><rect x="10.500" y="11.500" width="3" height="3" fill="#fff" stroke="#55557a" stroke-width=".6"/></svg>
<div class="abs" style="left:4px;top:641px;width:22px;height:1px;background:#d4d4d4"></div>
<svg class="abs" style="left:5px;top:656px" width="20" height="20" viewBox="0 0 20 20" ><circle cx="10" cy="10" r="8.100" fill="#f6f6f6" stroke="#cdcdcd" stroke-width="1"/><path d="M4.200 10H15.800M10 4.200V15.800" stroke="#b9b9b9" stroke-width="2"/></svg>

<!-- RULERS -->
<svg class="abs" style="left:30px;top:133px;font-family:'Liberation Sans',sans-serif" width="1026" height="19" viewBox="0 0 1026 19"><path d="M28.5 16V17M40.5 15.3V18M52.5 16V17M64.5 16V17M76.5 16V17M88.5 16V17M100.5 13V18M112.5 16V17M124.5 16V17M136.5 16V17M148.5 16V17M160.5 15.3V18M172.5 16V17M184.5 16V17M196.5 16V17M208.5 16V17M220.5 13V18M232.5 16V17M244.5 16V17M256.5 16V17M268.5 16V17M280.5 15.3V18M292.5 16V17M304.5 16V17M316.5 16V17M328.5 16V17M340.5 13V18M352.5 16V17M364.5 16V17M376.5 16V17M388.5 16V17M400.5 15.3V18M412.5 16V17M424.5 16V17M436.5 16V17M448.5 16V17M460.5 13V18M472.5 16V17M484.5 16V17M496.5 16V17M508.5 16V17M520.5 15.3V18M532.5 16V17M544.5 16V17M556.5 16V17M568.5 16V17M580.5 13V18M592.5 16V17M604.5 16V17M616.5 16V17M628.5 16V17M640.5 15.3V18M652.5 16V17M664.5 16V17M676.5 16V17M688.5 16V17M700.5 13V18M712.5 16V17M724.5 16V17M736.5 16V17M748.5 16V17M760.5 15.3V18M772.5 16V17M784.5 16V17M796.5 16V17M808.5 16V17M820.5 13V18M832.5 16V17M844.5 16V17M856.5 16V17M868.5 16V17M880.5 15.3V18M892.5 16V17M904.5 16V17M916.5 16V17M928.5 16V17M940.5 13V18M952.5 16V17M964.5 16V17M976.5 16V17M988.5 16V17M1000.5 15.3V18M1012.5 16V17M1024.5 16V17" stroke="#77777f" stroke-width="1" fill="none"/><text x="100.8" y="10.600" text-anchor="middle" font-size="9.300" fill="#85859a" letter-spacing="-0.25">0</text><text x="220.8" y="10.600" text-anchor="middle" font-size="9.300" fill="#85859a" letter-spacing="-0.25">500</text><text x="340.8" y="10.600" text-anchor="middle" font-size="9.300" fill="#85859a" letter-spacing="-0.25">1000</text><text x="460.8" y="10.600" text-anchor="middle" font-size="9.300" fill="#85859a" letter-spacing="-0.25">1500</text><text x="580.8" y="10.600" text-anchor="middle" font-size="9.300" fill="#85859a" letter-spacing="-0.25">2000</text><text x="700.8" y="10.600" text-anchor="middle" font-size="9.300" fill="#85859a" letter-spacing="-0.25">2500</text><text x="820.8" y="10.600" text-anchor="middle" font-size="9.300" fill="#85859a" letter-spacing="-0.25">3000</text><text x="940.8" y="10.600" text-anchor="middle" font-size="9.300" fill="#85859a" letter-spacing="-0.25">3500</text><text x="1022.500" y="10.600" text-anchor="end" font-size="9.300" fill="#85859a" letter-spacing="0.3">pixels</text><path d="M962.500 2.500V18" stroke="#000" stroke-width="1.300" stroke-dasharray="3 1.500"/></svg>
<div class="abs" style="left:48px;top:151px;width:1008px;height:1px;background:#8f8f8f"></div>
<svg class="abs" style="left:35px;top:138px" width="12" height="12" viewBox="0 0 12 12"><path d="M1 3.500H3M5 3.500H7M9 3.500H11" stroke="#000" stroke-width="1.100"/><path d="M3.500 1V2.800M3.500 5V7M3.500 9V11" stroke="#000" stroke-width="1.100"/><path d="M5.300 5.300L9 9" stroke="#000" stroke-width="1.100"/><path d="M10 7V10H7Z" fill="#000"/></svg>
<svg class="abs" style="left:30px;top:152px;font-family:'Liberation Sans',sans-serif" width="19" height="532" viewBox="0 0 19 532"><path d="M16 2.5H17M16 14.5H17M16 26.5H17M16 38.5H17M15.3 50.5H18M16 62.5H17M16 74.5H17M16 86.5H17M16 98.5H17M13 110.5H18M16 122.5H17M16 134.5H17M16 146.5H17M16 158.5H17M15.3 170.5H18M16 182.5H17M16 194.5H17M16 206.5H17M16 218.5H17M13 230.5H18M16 242.5H17M16 254.5H17M16 266.5H17M16 278.5H17M15.3 290.5H18M16 302.5H17M16 314.5H17M16 326.5H17M16 338.5H17M13 350.5H18M16 362.5H17M16 374.5H17M16 386.5H17M16 398.5H17M15.3 410.5H18M16 422.5H17M16 434.5H17M16 446.5H17M16 458.5H17M13 470.5H18M16 482.5H17M16 494.5H17M16 506.5H17M16 518.5H17M15.3 530.5H18" stroke="#77777f" stroke-width="1" fill="none"/><text transform="translate(10.9,108.9) rotate(-90)" text-anchor="middle" font-size="9.300" fill="#85859a" letter-spacing="-0.25">2000</text><text transform="translate(10.9,228.9) rotate(-90)" text-anchor="middle" font-size="9.300" fill="#85859a" letter-spacing="-0.25">1500</text><text transform="translate(10.9,348.9) rotate(-90)" text-anchor="middle" font-size="9.300" fill="#85859a" letter-spacing="-0.25">1000</text><text transform="translate(10.9,468.9) rotate(-90)" text-anchor="middle" font-size="9.300" fill="#85859a" letter-spacing="-0.25">500</text><text transform="translate(10.9,517.0) rotate(-90)" text-anchor="middle" font-size="9.300" fill="#85859a" letter-spacing="0.3">pixels</text><path d="M2 103H18" stroke="#000" stroke-width="1.300" stroke-dasharray="3 1.500"/></svg>
<div class="abs" style="left:48px;top:151px;width:1px;height:517px;background:#8f8f8f"></div>

<!-- CANVAS -->
<div id="canvas" class="abs" style="left:49px;top:152px;width:1007px;height:516px;background:#fff;overflow:hidden">
<svg class="abs" style="left:0;top:0" width="1007" height="516" viewBox="49 152 1007 516">
<defs><path id="bk" d="M644,172.7 H693 C698.2,172.7 701.2,175.6 699.7,180.6 L684,233.7 Q681,244.5 671.5,244.5 H625 A3.950,3.950 0 0 0 625,252.4 H680 Q685.2,252.4 686.6,248 L703.3,189.7 C706,190 709.3,193.5 708.3,197.5 L691.8,251.5 Q689.5,259.2 682,259.2 H628 C619,259.2 612,251 615.3,241.2 L637.6,177.6 C638.8,174.3 640.3,172.7 644,172.7 Z"/><path id="cv" d="M644,172.7 H693 C698.2,172.7 701.2,175.6 699.7,180.6 L684,233.7 Q681,244.5 671.5,244.5 H620 Q613.5,244.5 615.6,239.5 L637.6,177.6 C638.8,174.3 640.3,172.7 644,172.7 Z"/><path id="ky" d="M-79.8,-5.1 H-20.01 A20.65,20.65 0 1 1 -19.93,5.4 H-43.3 V20.6 H-53.6 V15.4 H-64.1 V20.6 H-74.6 V5.4 H-79.8 Z M8.2,0 A8.2,8.2 0 1 0 -8.2,0 A8.2,8.2 0 1 0 8.2,0 Z" fill-rule="evenodd"/><linearGradient id="tileg" x1="0" y1="0" x2="0" y2="1"><stop offset="0" stop-color="#bfe1fb"/><stop offset=".45" stop-color="#c5ddf0"/><stop offset="1" stop-color="#cfd8dd"/></linearGradient><linearGradient id="gloss" x1="0.35" y1="0" x2="0.75" y2="1"><stop offset="0" stop-color="#fff" stop-opacity=".58"/><stop offset=".4" stop-color="#fff" stop-opacity=".32"/><stop offset="1" stop-color="#fff" stop-opacity="0"/></linearGradient></defs>
<path d="M187.4,172.6 H230.5 L238.1,183 L223.3,233.9 L211.5,244.6 H162.4 L156.8,234.3 L175.8,180.6 Z" fill="#c2105f" stroke="#231815" stroke-width=".7"/>
<use href="#cv" x="-345.8" fill="#c2105f" stroke="#231815" stroke-width=".7"/>
<g transform="translate(-232.4,0)"><path transform="translate(2.4,0)" d="M702,188 Q706.5,189.5 706.1,194 L690,251.5 Q688,259.2 681,259.2 H626.5 Q622.5,259.2 622.8,255.5 Q622.8,252 626,252 H676.5 Q683,252 684.7,247.1 Z" fill="#9d9e9e" stroke="#231815" stroke-width=".7"/><use href="#cv" fill="#c2105f" stroke="#231815" stroke-width=".7"/></g>
<path transform="translate(-117.3,0)" d="M644,172.7 H693 C698.2,172.7 701.2,175.6 699.7,180.6 L684,233.7 Q681,244.5 671.5,244.5 H623.5 L629.2,252 H679.3 Q685.3,252 686.8,247 L703.3,189.5 Q708.8,191.5 708.1,198.8 L692.8,251 Q690.3,259.2 683.3,259.2 H629.2 L615.5,240.7 L637.6,177.6 C638.8,174.3 640.3,172.7 644,172.7 Z" fill="#c2105f" stroke="#231815" stroke-width=".7"/>
<use href="#bk" fill="#c2105f" stroke="#231815" stroke-width=".7"/>
<g fill="none" stroke="#3a2f2c" stroke-width=".75"><rect x="157.2" y="328.8" width="94.6" height="10.5"/><circle cx="237" cy="333.9" r="20.65"/></g>
<g fill="none" stroke="#3a2f2c" stroke-width=".75"><rect x="296.6" y="328.8" width="95.1" height="10.5"/><circle cx="376.1" cy="333.9" r="20.65"/><rect x="301.7" y="333.9" width="10.3" height="20.6"/><rect x="322.2" y="333.9" width="10.5" height="20.6"/></g>
<g fill="none" stroke="#3a2f2c" stroke-width=".75"><rect x="433" y="328.8" width="94.4" height="10.5"/><circle cx="512.9" cy="333.9" r="20.65"/><path d="M438.3,333.9 H469.6 V354.5 H459.3 V349.29999999999995 H448.8 V354.5 H438.3 Z" stroke="#15100e" stroke-width=".95"/></g>
<g fill="none" stroke="#3a2f2c" stroke-width=".75"><rect x="572.5" y="328.8" width="95.2" height="10.5"/><circle cx="652" cy="333.9" r="20.65"/><path d="M577.6,333.9 H608.9 V354.5 H598.6 V349.29999999999995 H588.1 V354.5 H577.6 Z" stroke="#15100e" stroke-width=".95"/></g>
<g fill="none" stroke="#2a211f" stroke-width=".85"><path d="M768.49,328.8 H708.6 V339.3 H768.57 A20.65,20.65 0 1 0 768.49,328.8 Z"/><circle cx="788.5" cy="333.9" r="8.2"/><path d="M713.9,333.9 H745.1999999999999 V354.5 H734.9 V349.29999999999995 H724.4 V354.5 H713.9 Z" stroke="#15100e" stroke-width=".95"/></g>
<g transform="translate(928,333.9)" fill="none" stroke="#241c1a" stroke-width=".9"><use href="#ky"/></g>
<use href="#bk" transform="translate(-456.8,235.7)" fill="#c2105f" stroke="#1a1210" stroke-width="1.050"/>
<g transform="translate(199.5,429.5) rotate(-90) scale(.545)"><use href="#ky" fill="#fff" stroke="#1a1210" stroke-width="2"/></g>
<use href="#bk" transform="translate(-342.5,235.7)" fill="#c2105f" stroke="#1a1210" stroke-width="1.050"/>
<g transform="translate(326.9,432.5) rotate(-40) scale(.527)"><use href="#ky" fill="#fff" stroke="#1a1210" stroke-width="2"/></g>
<circle cx="326.9" cy="414.9" r="6.3" fill="#ffed00"/>
<circle cx="345.2" cy="432.2" r="6.3" fill="#ffed00"/>
<circle cx="285.6" cy="459.2" r="6.3" fill="#ffed00"/>
<circle cx="303.3" cy="473.8" r="6.3" fill="#ffed00"/>
<use href="#bk" transform="translate(-226.8,235.7)" fill="#c2105f" stroke="#1a1210" stroke-width="1.050"/>
<g transform="translate(443,432.5) rotate(-40) scale(.56)"><use href="#ky" fill="#fff" stroke="#1a1210" stroke-width="1.900"/></g>
<use href="#bk" transform="translate(-111.8,235.9)" fill="#c2105f"/>
<g transform="translate(557.6,432.5) rotate(-40) scale(.565)"><use href="#ky" fill="#fff"/></g>
<rect x="632" y="385" width="139" height="139" fill="#c9d9e6"/>
<g transform="translate(647.2,401.7) scale(1.152) translate(-614.2,-172.7)"><use href="#bk" fill="#c2105f"/><g transform="translate(670.4,196.8) rotate(-40) scale(.565)"><use href="#ky" fill="#c9d9e6"/></g></g>
<rect x="812" y="385" width="139.500" height="139" rx="42" ry="42" fill="#c9d9e6"/>
<g transform="translate(827.2,401.7) scale(1.152) translate(-614.2,-172.7)"><use href="#bk" fill="#c2105f"/><g transform="translate(670.4,196.8) rotate(-40) scale(.565)"><use href="#ky" fill="#c9d9e6"/></g></g>
<circle cx="929.1" cy="399" r="7.5" fill="#ffed00"/>
<circle cx="943.3" cy="428.8" r="7.5" fill="#ffed00"/>
<circle cx="826.6" cy="501.9" r="7.5" fill="#ffed00"/>
<rect x="160.700" y="558.800" width="86" height="86" rx="26" ry="26" fill="url(#tileg)"/>
<g transform="translate(169.9,569.2) scale(.709) translate(-614.2,-172.7)"><use href="#bk" fill="#c2105f"/><clipPath id="cvc"><use href="#cv"/></clipPath><path clip-path="url(#cvc)" d="M661,172 H704 V206 H694 Q690,184 661,172 Z" fill="url(#gloss)"/><g transform="translate(670.4,196.8) rotate(-40) scale(.565)"><use href="#ky" fill="#c3ddf2"/></g></g>
</svg>
</div>
<div class="abs" style="left:130px;top:152px;width:1px;height:516px;background:#a4a4a4"></div>
<div class="abs" style="left:972px;top:152px;width:7px;height:515px;background:#c2c2c2"></div>
<div class="abs" style="left:1039px;top:152px;width:17px;height:17px;background:#f1f1f1"></div>
<svg class="abs" style="left:1042.5px;top:156.5px" width="10" height="8" viewBox="0 0 10 8" ><path d="M1.500 6L5 2.500L8.500 6" fill="none" stroke="#444" stroke-width="1.800"/></svg>
<div class="abs" style="left:1039px;top:301px;width:15px;height:192px;background:#cdcdcd"></div>
<div class="abs" style="left:1039px;top:650px;width:17px;height:17px;background:#f1f1f1"></div>
<svg class="abs" style="left:1042.5px;top:655px" width="10" height="8" viewBox="0 0 10 8" ><path d="M1.500 2L5 5.500L8.500 2" fill="none" stroke="#444" stroke-width="1.800"/></svg>
<div class="abs" style="left:1056px;top:113px;width:5px;height:591px;background:#fff"></div>
<div class="abs" style="left:1056px;top:133px;width:1px;height:571px;background:#e2e2e2"></div>
<div class="abs" style="left:1060px;top:113px;width:1px;height:591px;background:#e6e6e6"></div>
<div class="abs" style="left:49px;top:667px;width:505px;height:1px;background:#9c9c9c"></div>
<div class="abs" style="left:49px;top:668px;width:504px;height:16px;background:#f4f4f4"></div>
<svg class="abs" style="left:51px;top:669px" width="11" height="13" viewBox="0 0 11 13" ><path d="M1.500 0.600H6L9.500 4V12.400H1.500Z" fill="#fff" stroke="#000" stroke-width="1.100"/><path d="M6 0.600V4H9.500" fill="none" stroke="#000" stroke-width="1"/><path d="M3.300 8H7.700M5.500 5.800V10.200" stroke="#000" stroke-width="1.300"/></svg>
<svg class="abs" style="left:69px;top:670px" width="9" height="11" viewBox="0 0 9 11" ><path d="M1.500 1V10" stroke="#8a8a8a" stroke-width="1.300"/><path d="M8 1V10L3 5.500Z" fill="#8a8a8a"/></svg>
<svg class="abs" style="left:88px;top:670px" width="7" height="11" viewBox="0 0 7 11" ><path d="M6.200 1V10L1 5.500Z" fill="#8a8a8a"/></svg>
<div class="t" style="left:115px;top:671px;font-size:12px;letter-spacing:-0.4px">1 of 1</div>
<svg class="abs" style="left:166px;top:670px" width="7" height="11" viewBox="0 0 7 11" ><path d="M0.800 1V10L6 5.500Z" fill="#8a8a8a"/></svg>
<svg class="abs" style="left:181px;top:670px" width="9" height="11" viewBox="0 0 9 11" ><path d="M7.500 1V10" stroke="#8a8a8a" stroke-width="1.300"/><path d="M1 1V10L6 5.500Z" fill="#8a8a8a"/></svg>
<svg class="abs" style="left:197px;top:669px" width="11" height="13" viewBox="0 0 11 13" ><path d="M1.500 0.600H6L9.500 4V12.400H1.500Z" fill="#fff" stroke="#000" stroke-width="1.100"/><path d="M6 0.600V4H9.500" fill="none" stroke="#000" stroke-width="1"/><path d="M3.300 8H7.700M5.500 5.800V10.200" stroke="#000" stroke-width="1.300"/></svg>
<svg class="abs" style="left:211px;top:667px" width="70" height="18" viewBox="0 0 70 18" ><path d="M1.500 17.500V1.500H60.500L67.500 9V17.500" fill="#fff" stroke="#8c8c8c" stroke-width="1"/><path d="M1.500 1V17.500" stroke="#555" stroke-width="1"/></svg>
<div class="t" style="left:227px;top:669.500px;font-size:12px;letter-spacing:-0.72px">Page 1</div>
<svg class="abs" style="left:546px;top:670px" width="4" height="13" viewBox="0 0 4 13" ><path d="M1.500 0V13" stroke="#b0b0b0" stroke-width="1.500" stroke-dasharray="1.500 2"/></svg>
<div class="abs" style="left:553px;top:668px;width:1px;height:16px;background:#b4b4b4"></div>
<div class="abs" style="left:554px;top:668px;width:502px;height:16px;background:#fff"></div>
<div class="abs" style="left:554px;top:668px;width:16px;height:16px;background:#f1f1f1"></div>
<svg class="abs" style="left:557.5px;top:671px" width="8" height="10" viewBox="0 0 8 10" ><path d="M6 1.500L2.500 5L6 8.500" fill="none" stroke="#444" stroke-width="1.800"/></svg>
<div class="abs" style="left:676px;top:668px;width:236px;height:14.500px;background:#cbcbcb"></div>
<div class="abs" style="left:1021px;top:668px;width:17px;height:16px;background:#f1f1f1"></div>
<svg class="abs" style="left:1026px;top:671px" width="8" height="10" viewBox="0 0 8 10" ><path d="M2 1.500L5.500 5L2 8.500" fill="none" stroke="#444" stroke-width="1.800"/></svg>
<svg class="abs" style="left:1040px;top:669px" width="16" height="16" viewBox="0 0 16 16" ><circle cx="6" cy="6" r="4.800" fill="#fff" stroke="#3a3a5a" stroke-width="1.300"/><circle cx="6" cy="6" r="2" fill="none" stroke="#3a3a5a" stroke-width="1"/><path d="M6 1.500V10.500M1.500 6H10.500" stroke="#3a3a5a" stroke-width=".6"/><path d="M9.500 9.500L14 14" stroke="#3a3a5a" stroke-width="2.200"/></svg>
<div class="abs" style="left:30px;top:684px;width:1026px;height:1px;background:#c4c4c4"></div>

<!-- DOCKER -->
<div class="abs" style="left:1061px;top:113px;width:286px;height:45px;background:#e9e9e9"></div>
<div class="abs" style="left:1061px;top:158px;width:267px;height:546px;background:#f4f4f4"></div>
<div class="t" style="left:1063.500px;top:117px;font-size:12px;letter-spacing:-0.13px">Object Properties</div>
<div class="abs" style="left:1061px;top:132px;width:267px;height:1px;background:#a6a6a6"></div>
<svg class="abs" style="left:1316px;top:117px" width="10" height="10" viewBox="0 0 10 10" ><path d="M0.800 1.200L4.800 5L0.800 8.800ZM5.200 1.200L9.200 5L5.200 8.800Z" fill="#b4b4b4"/></svg>
<svg class="abs" style="left:1333px;top:117px" width="10" height="10" viewBox="0 0 10 10" ><path d="M1 1.200L8.600 8.800M8.600 1.200L1 8.800" stroke="#b8b8b8" stroke-width="1.300"/></svg>
<svg class="abs" style="left:1066px;top:136px" width="13" height="18" viewBox="0 0 13 18" ><path d="M6.500 1.800C9.500 5 10.500 8.500 9 13H4C2.500 8.500 3.500 5 6.500 1.800Z" fill="#f0f0f8" stroke="#55557a" stroke-width="1.100"/><path d="M6.500 5.500V11" stroke="#55557a" stroke-width=".9"/><circle cx="6.500" cy="9.500" r=".9" fill="#55557a"/><path d="M2.500 14H10.500" stroke="#55557a" stroke-width="1"/><path d="M2 16H11" stroke="#22223a" stroke-width="1.600"/></svg>
<svg class="abs" style="left:1091px;top:135px" width="19" height="19" viewBox="0 0 19 19" ><path d="M2 10.500L8.500 3.500L15 10.500L8.500 17Z" fill="#fff" stroke="#33334a" stroke-width="1.200"/><path d="M3 10.700H14L8.500 16.200Z" fill="#ee7d10"/><path d="M7 1.500L10.500 5.500" stroke="#33334a" stroke-width="1.200"/><circle cx="9.500" cy="8" r=".9" fill="#33334a"/><path d="M14.500 10C16.800 10.500 17.500 13 17.200 16.500" fill="none" stroke="#ee7d10" stroke-width="1.600"/></svg>
<div class="abs" style="left:1118px;top:134px;width:23px;height:23px;background:#fff;border:1px solid #b0b0b0"></div>
<svg class="abs" style="left:1122px;top:138px" width="15" height="17" viewBox="0 0 15 17" ><path d="M2.500 1.500H12.500C12.500 6 10.500 8.500 7.500 8.500C4.500 8.500 2.500 6 2.500 1.500Z" fill="#fff" stroke="#55557a" stroke-width="1.100"/><path d="M7.500 8.500V15" stroke="#33334a" stroke-width="1.300"/><path d="M3.500 15.200H11.500" stroke="#33334a" stroke-width="1.300"/></svg>
<svg class="abs" style="left:1275px;top:137px" width="18" height="16" viewBox="0 0 18 16" ><path d="M1.500 3.500V14.500H16.500V3.500L15 1.500H3Z" fill="#fff" stroke="#55557a" stroke-width="1.200"/><path d="M3 2H8V3.500H3ZM9.500 2H15V3.500H9.500Z" fill="#d8d8e4"/><path d="M8 5.500H10V9H12L9 12.500L6 9H8Z" fill="#33334a"/></svg>
<div class="sep" style="left:1299px;top:136px;height:20px;background:#d4d4d4"></div>
<div class="abs" style="left:1303px;top:134px;width:23px;height:23px;background:#fff;border:1px solid #b0b0b0"></div>
<svg class="abs" style="left:1305px;top:137px" width="20" height="18" viewBox="0 0 20 18" ><rect x="2" y="2" width="10.500" height="9" fill="#fff" stroke="#55557a" stroke-width="1.200"/><ellipse cx="12" cy="11.500" rx="5.800" ry="3.800" fill="#fff" stroke="#b0b0bc" stroke-width="1.100"/><circle cx="11.800" cy="11.200" r="3" fill="#55556a"/><circle cx="11" cy="10.300" r=".9" fill="#d8d8e0"/></svg>
<div class="abs" style="left:1310px;top:158px;width:17px;height:546px;background:#f1f1f1"></div>
<svg class="abs" style="left:1313px;top:163.5px" width="10" height="8" viewBox="0 0 10 8" ><path d="M1.500 6L5 2.500L8.500 6" fill="none" stroke="#444" stroke-width="1.800"/></svg>
<div class="abs" style="left:1311px;top:426px;width:15px;height:261px;background:#cbcbcb"></div>
<svg class="abs" style="left:1313.5px;top:692px" width="10" height="8" viewBox="0 0 10 8" ><path d="M1.500 2L5 5.500L8.500 2" fill="none" stroke="#444" stroke-width="1.800"/></svg>
<div class="abs" style="left:1327px;top:132px;width:1px;height:572px;background:#08a0ee"></div>
<div class="abs" style="left:1328px;top:132px;width:19.500px;height:572px;background:#e9e9e9"></div>
<div class="abs" style="left:1328px;top:132px;width:19.500px;height:71px;background:#d6d6d6"></div>
<div class="abs" style="left:1328px;top:203px;width:19.500px;height:135px;background:#cfe3fc"></div>
<div class="abs" style="left:1328px;top:338px;width:19.500px;height:128px;background:#d6d6d6"></div>
<div style="position:absolute;writing-mode:vertical-rl;white-space:nowrap;font-size:12px;line-height:14px;width:14px;left:1330px;top:156px;letter-spacing:0px">Hints</div>
<div style="position:absolute;writing-mode:vertical-rl;white-space:nowrap;font-size:12px;line-height:14px;width:14px;left:1330px;top:229px;letter-spacing:-0.26px">Object Properties</div>
<div style="position:absolute;writing-mode:vertical-rl;white-space:nowrap;font-size:12px;line-height:14px;width:14px;left:1330px;top:364px;letter-spacing:-0.03px">Object Manager</div>
<svg class="abs" style="left:1329px;top:135px" width="18" height="17" viewBox="0 0 18 17"><path d="M1.500 1L1.500 11.500L4 9.300L6.200 14.500L8.600 13.500L6.300 8.600L9.800 8.300Z" fill="#fff" stroke="#8a8aaa" stroke-width="1" stroke-linejoin="round"/><path d="M1.800 1.300L9.800 8.300L6.300 8.600L8.600 13.500L6.200 14.500" fill="none" stroke="#1a1a24" stroke-width="1.100" stroke-dasharray="2.200 .8"/><path d="M10.500 2H15.600V4L13.700 7.200V11.200" fill="none" stroke="#5a5a72" stroke-width="1.600"/><path d="M10.500 2.600H12M13.500 2.600H14.500M16 0.800V1.800M13.700 8V11.500M15.800 4.500L14.500 6.200" stroke="#111" stroke-width="1" fill="none"/></svg>
<svg class="abs" style="left:1330px;top:208px" width="16" height="15" viewBox="0 0 16 15" ><path d="M1 6.500L6.500 1.500V11.500Z" fill="#f6d9a0" stroke="#8a8aa0" stroke-width=".8"/><rect x="6.500" y="4.500" width="7.500" height="8" fill="#dcdcec" stroke="#6c6a92" stroke-width="1"/><path d="M7 3L14.500 13M14.500 3.500L7 12.500" stroke="#6c6a92" stroke-width=".9"/><rect x="9" y="7" width="3" height="3" fill="#fff" stroke="#6c6a92" stroke-width=".7"/></svg>
<svg class="abs" style="left:1330px;top:343px" width="16" height="16" viewBox="0 0 16 16" ><path d="M2 2H6M2 2V13H5M2 7.500H5" fill="none" stroke="#33334a" stroke-width="1" stroke-dasharray="1 1"/><rect x="7" y="1" width="3" height="2.500" fill="#8a8aa4"/><rect x="11.500" y="1" width="3" height="2.500" fill="#8a8aa4"/><path d="M6 6.500H10M6 8.500H14M6 12H9M10.500 12H14" stroke="#6c6a92" stroke-width="1.200"/><rect x="11" y="5.500" width="3.500" height="2" fill="#6c6a92"/></svg>
<svg class="abs" style="left:1328px;top:483px" width="20" height="20" viewBox="0 0 20 20" ><circle cx="10" cy="10" r="8.100" fill="#f6f6f6" stroke="#cdcdcd" stroke-width="1"/><path d="M4.200 10H15.800M10 4.200V15.800" stroke="#b9b9b9" stroke-width="2"/></svg>

<!-- PALETTES -->
<div class="abs" style="left:1347px;top:113px;width:19px;height:591px;background:#f4f4f4"></div>
<svg class="abs" style="left:1350px;top:116px" width="14" height="4" viewBox="0 0 14 4" ><path d="M1 2H13" stroke="#b8b8b8" stroke-width="1.500" stroke-dasharray="1.500 2.500"/></svg>
<svg class="abs" style="left:1353px;top:122px" width="7" height="11" viewBox="0 0 7 11" ><path d="M0.800 0.800V10.200L6.200 5.500Z" fill="#000"/></svg>
<svg class="abs" style="left:1350px;top:136px" width="14" height="14" viewBox="0 0 14 14" ><path d="M2 12.500L8 5.500L9.500 7L3 13Z" fill="#cfcfcf"/><path d="M7.500 3.500L11.500 7.500L12.800 5L13.500 2L11.500 0.800L9.500 1.800Z" fill="#bdbdbd"/></svg>
<svg class="abs" style="left:1351px;top:153px" width="12" height="8" viewBox="0 0 12 8" ><path d="M1.500 6.500L6 2L10.500 6.500" fill="none" stroke="#cdcdd4" stroke-width="1.600"/></svg>
<div class="abs" style="left:1348px;top:167px;width:18px;height:495.500px;background:#787878"></div>
<div class="abs" style="left:1349px;top:168px;width:16px;height:16px;background:#fff"></div>
<svg class="abs" style="left:1349px;top:168px" width="16" height="16" viewBox="0 0 16 16"><path d="M1 1L15 15M15 1L1 15" stroke="#222" stroke-width=".9"/></svg>
<div class="abs" style="left:1349px;top:185px;width:16px;height:16px;background:#231815"></div>
<div class="abs" style="left:1349px;top:202px;width:16px;height:16px;background:#3e3a39"></div>
<div class="abs" style="left:1349px;top:219px;width:16px;height:16px;background:#595757"></div>
<div class="abs" style="left:1349px;top:236px;width:16px;height:16px;background:#727171"></div>
<div class="abs" style="left:1349px;top:253px;width:16px;height:16px;background:#898989"></div>
<div class="abs" style="left:1349px;top:270px;width:16px;height:16px;background:#9fa0a0"></div>
<div class="abs" style="left:1349px;top:287px;width:16px;height:16px;background:#b5b5b6"></div>
<div class="abs" style="left:1349px;top:304px;width:16px;height:16px;background:#c9caca"></div>
<div class="abs" style="left:1349px;top:321px;width:16px;height:16px;background:#dcdddd"></div>
<div class="abs" style="left:1349px;top:338px;width:16px;height:16px;background:#efefef"></div>
<div class="abs" style="left:1349px;top:355px;width:16px;height:16px;background:#ffffff"></div>
<div class="abs" style="left:1349px;top:372px;width:16px;height:16px;background:#1d2088"></div>
<div class="abs" style="left:1349px;top:389px;width:16px;height:16px;background:#00a0e9"></div>
<div class="abs" style="left:1349px;top:406px;width:16px;height:16px;background:#009944"></div>
<div class="abs" style="left:1349px;top:423px;width:16px;height:16px;background:#fff100"></div>
<div class="abs" style="left:1349px;top:440px;width:16px;height:16px;background:#e60012"></div>
<div class="abs" style="left:1349px;top:457px;width:16px;height:16px;background:#e4007f"></div>
<div class="abs" style="left:1349px;top:474px;width:16px;height:16px;background:#a9408c"></div>
<div class="abs" style="left:1349px;top:491px;width:16px;height:16px;background:#f08300"></div>
<div class="abs" style="left:1349px;top:508px;width:16px;height:16px;background:#f5b2b2"></div>
<div class="abs" style="left:1349px;top:525px;width:16px;height:16px;background:#867268"></div>
<div class="abs" style="left:1349px;top:542px;width:16px;height:16px;background:#d2cde6"></div>
<div class="abs" style="left:1349px;top:559px;width:16px;height:16px;background:#a59aca"></div>
<div class="abs" style="left:1349px;top:576px;width:16px;height:16px;background:#6e8ccb"></div>
<div class="abs" style="left:1349px;top:593px;width:16px;height:16px;background:#7768b0"></div>
<div class="abs" style="left:1349px;top:610px;width:16px;height:16px;background:#8e82b2"></div>
<div class="abs" style="left:1349px;top:627px;width:16px;height:16px;background:#4d638c"></div>
<div class="abs" style="left:1349px;top:644px;width:16px;height:16px;background:#574d70"></div>
<div class="abs" style="left:1349px;top:661px;width:16px;height:1.500px;background:#6d7fa4"></div>
<svg class="abs" style="left:1352px;top:665px" width="11" height="9" viewBox="0 0 11 9" ><path d="M1.500 2L5.500 6.500L9.500 2" fill="none" stroke="#a4a4a4" stroke-width="1.700"/></svg>
<svg class="abs" style="left:1352px;top:684px" width="11" height="9" viewBox="0 0 11 9" ><path d="M1 1L4.500 4.500L1 8M5.500 1L9 4.500L5.500 8" fill="none" stroke="#c4c4cc" stroke-width="1.300"/></svg>
<div class="abs" style="left:30px;top:685px;width:1026px;height:19px;background:#f4f4f4"></div>
<svg class="abs" style="left:33px;top:689px" width="4" height="12" viewBox="0 0 4 12" ><path d="M2 0.500V12" stroke="#b8b8b8" stroke-width="1.500" stroke-dasharray="1.500 2.500"/></svg>
<svg class="abs" style="left:41px;top:689px" width="7" height="11" viewBox="0 0 7 11" ><path d="M0.800 0.800V10.200L6.200 5.500Z" fill="#000"/></svg>
<svg class="abs" style="left:53px;top:687px" width="14" height="16" viewBox="0 0 14 16" ><path d="M1.500 14L7.500 6.500L9 8L2.500 14.500Z" fill="#86a0a8" stroke="#4a5a6a" stroke-width=".6"/><path d="M6.800 4.500L11 8.700L12.500 6L13.300 2.800L11.200 1.200L9 2.200Z" fill="#22223a"/></svg>
<svg class="abs" style="left:69px;top:690px" width="10" height="11" viewBox="0 0 10 11" ><path d="M8 1L2 5.500L8 10" fill="none" stroke="#d0d0d0" stroke-width="1.600"/></svg>
<div class="abs" style="left:84px;top:686px;width:443.500px;height:18px;background:#858585"></div>
<div class="abs" style="left:85px;top:687px;width:16px;height:16px;background:#fff"></div>
<svg class="abs" style="left:85px;top:687px" width="16" height="16" viewBox="0 0 16 16"><path d="M1 1L15 15M15 1L1 15" stroke="#222" stroke-width=".9"/></svg>
<div class="abs" style="left:102px;top:687px;width:16px;height:16px;background:#ffed00"></div>
<div class="abs" style="left:119px;top:687px;width:16px;height:16px;background:#e30613"></div>
<div class="abs" style="left:136px;top:687px;width:16px;height:16px;background:#ffed00"></div>
<div class="abs" style="left:153px;top:687px;width:16px;height:16px;background:#000000"></div>
<div class="abs" style="left:170px;top:687px;width:16px;height:16px;background:#ff0000"></div>
<div class="abs" style="left:187px;top:687px;width:16px;height:16px;background:#2196f3"></div>
<div class="abs" style="left:204px;top:687px;width:16px;height:16px;background:#2962ff"></div>
<div class="abs" style="left:220px;top:686px;width:18px;height:18px;background:#fff"></div>
<div class="abs" style="left:221px;top:687px;width:16px;height:16px;background:#3a302c"></div>
<div class="abs" style="left:238px;top:687px;width:16px;height:16px;background:#4db6ac"></div>
<div class="abs" style="left:255px;top:687px;width:16px;height:16px;background:#004d40"></div>
<div class="abs" style="left:272px;top:687px;width:16px;height:16px;background:#e3f2fd"></div>
<div class="abs" style="left:289px;top:687px;width:16px;height:16px;background:#dcedc8"></div>
<div class="abs" style="left:306px;top:687px;width:16px;height:16px;background:#b2ebf2"></div>
<div class="abs" style="left:323px;top:687px;width:16px;height:16px;background:#e1bee7"></div>
<div class="abs" style="left:340px;top:687px;width:16px;height:16px;background:#bbdefb"></div>
<div class="abs" style="left:357px;top:687px;width:16px;height:16px;background:#ffffff"></div>
<div class="abs" style="left:374px;top:687px;width:16px;height:16px;background:#a6a6a6"></div>
<div class="abs" style="left:391px;top:687px;width:16px;height:16px;background:#a6a6a6"></div>
<div class="abs" style="left:408px;top:687px;width:16px;height:16px;background:#a6a6a6"></div>
<div class="abs" style="left:425px;top:687px;width:16px;height:16px;background:#a6a6a6"></div>
<div class="abs" style="left:442px;top:687px;width:16px;height:16px;background:#001f8f"></div>
<div class="abs" style="left:459px;top:687px;width:16px;height:16px;background:#ffe46b"></div>
<div class="abs" style="left:476px;top:687px;width:16px;height:16px;background:#ffffff"></div>
<div class="abs" style="left:493px;top:687px;width:16px;height:16px;background:#c9d9e6"></div>
<div class="abs" style="left:510px;top:687px;width:16px;height:16px;background:#c2105f"></div>
<svg class="abs" style="left:1018px;top:689px" width="12" height="11" viewBox="0 0 12 11" ><path d="M2 1L8 5.500L2 10" fill="none" stroke="#d4d4d4" stroke-width="1.600"/></svg>
<svg class="abs" style="left:1036px;top:690px" width="11" height="9" viewBox="0 0 11 9" ><path d="M1 1L4.500 4.500L1 8M5.500 1L9 4.500L5.500 8" fill="none" stroke="#c4c4cc" stroke-width="1.300"/></svg>

<!-- STATUS -->
<div class="abs" style="left:0;top:704px;width:1366px;height:1px;background:#dcdcdc"></div>
<div class="abs" style="left:0;top:705px;width:1366px;height:33px;background:#f4f4f4"></div>
<div class="t" style="left:6px;top:715px;font-size:12px;letter-spacing:-0.5px;white-space:pre">( 3.592 ; 2.031  )</div>
<div class="abs" style="left:94px;top:713px;width:15px;height:15px;background:#fff;border:1px solid #000"></div>
<svg class="abs" style="left:98px;top:716px" width="7" height="10" viewBox="0 0 7 10" ><path d="M0.800 0.500V9.500L6.200 5Z" fill="#000"/></svg>
<svg class="abs" style="left:911px;top:713px" width="17" height="17" viewBox="0 0 17 17" ><rect x="1.500" y="1.500" width="14" height="12" rx="1.200" fill="#fff" stroke="#6c6a92" stroke-width="1.100"/><rect x="2.800" y="2.800" width="11.400" height="3.200" fill="#c46a6a"/><rect x="2.800" y="6" width="11.400" height="3" fill="#6a9e6a"/><rect x="2.800" y="9" width="11.400" height="3.200" fill="#7c9cd8"/><circle cx="8.500" cy="7.500" r="2.600" fill="#fff" stroke="#22223a" stroke-width="1.300"/><path d="M4.500 15.500H12.500" stroke="#8c8aae" stroke-width="1"/></svg>
<svg class="abs" style="left:939px;top:712px" width="19" height="19" viewBox="0 0 19 19" ><path d="M2 10.500L8.500 3.500L15 10.500L8.500 17Z" fill="#fff" stroke="#33334a" stroke-width="1.200"/><path d="M3 10.700H14L8.500 16.200Z" fill="#ee7d10"/><path d="M7 1.500L10.500 5.500" stroke="#33334a" stroke-width="1.200"/><circle cx="9.500" cy="8" r=".9" fill="#33334a"/><path d="M14.500 10C16.800 10.500 17.500 13 17.200 16.500" fill="none" stroke="#ee7d10" stroke-width="1.600"/></svg>
<div class="abs" style="left:962px;top:712px;width:18px;height:18px;background:#fff;border:1px solid #8a8a8a"></div>
<svg class="abs" style="left:962px;top:712px" width="18" height="18" viewBox="0 0 18 18" ><path d="M1 1L17 17M17 1L1 17" stroke="#111" stroke-width="1"/></svg>
<div class="t" style="left:983.500px;top:716px;font-size:12px">None</div>
<div class="sep" style="left:1144px;top:710px;height:22px"></div>
<svg class="abs" style="left:1152px;top:712px" width="13" height="18" viewBox="0 0 13 18" ><path d="M6.500 1.800C9.500 5 10.500 8.500 9 13H4C2.500 8.500 3.500 5 6.500 1.800Z" fill="#f0f0f8" stroke="#55557a" stroke-width="1.100"/><path d="M6.500 5.500V11" stroke="#55557a" stroke-width=".9"/><circle cx="6.500" cy="9.500" r=".9" fill="#55557a"/><path d="M2.500 14H10.500" stroke="#55557a" stroke-width="1"/><path d="M2 16H11" stroke="#22223a" stroke-width="1.600"/></svg>
<div class="abs" style="left:1171px;top:712px;width:18px;height:18px;background:#231815;border:1px solid #9a9a9a"></div>
<div class="t" style="left:1192.500px;top:716px;font-size:12px;letter-spacing:-0.47px">C:0 M:0 Y:0 K:100</div>
<div class="t" style="left:1288.500px;top:716px;font-size:12px;letter-spacing:-0.3px">0,200 mm</div>


</div>
</body>
</html>
